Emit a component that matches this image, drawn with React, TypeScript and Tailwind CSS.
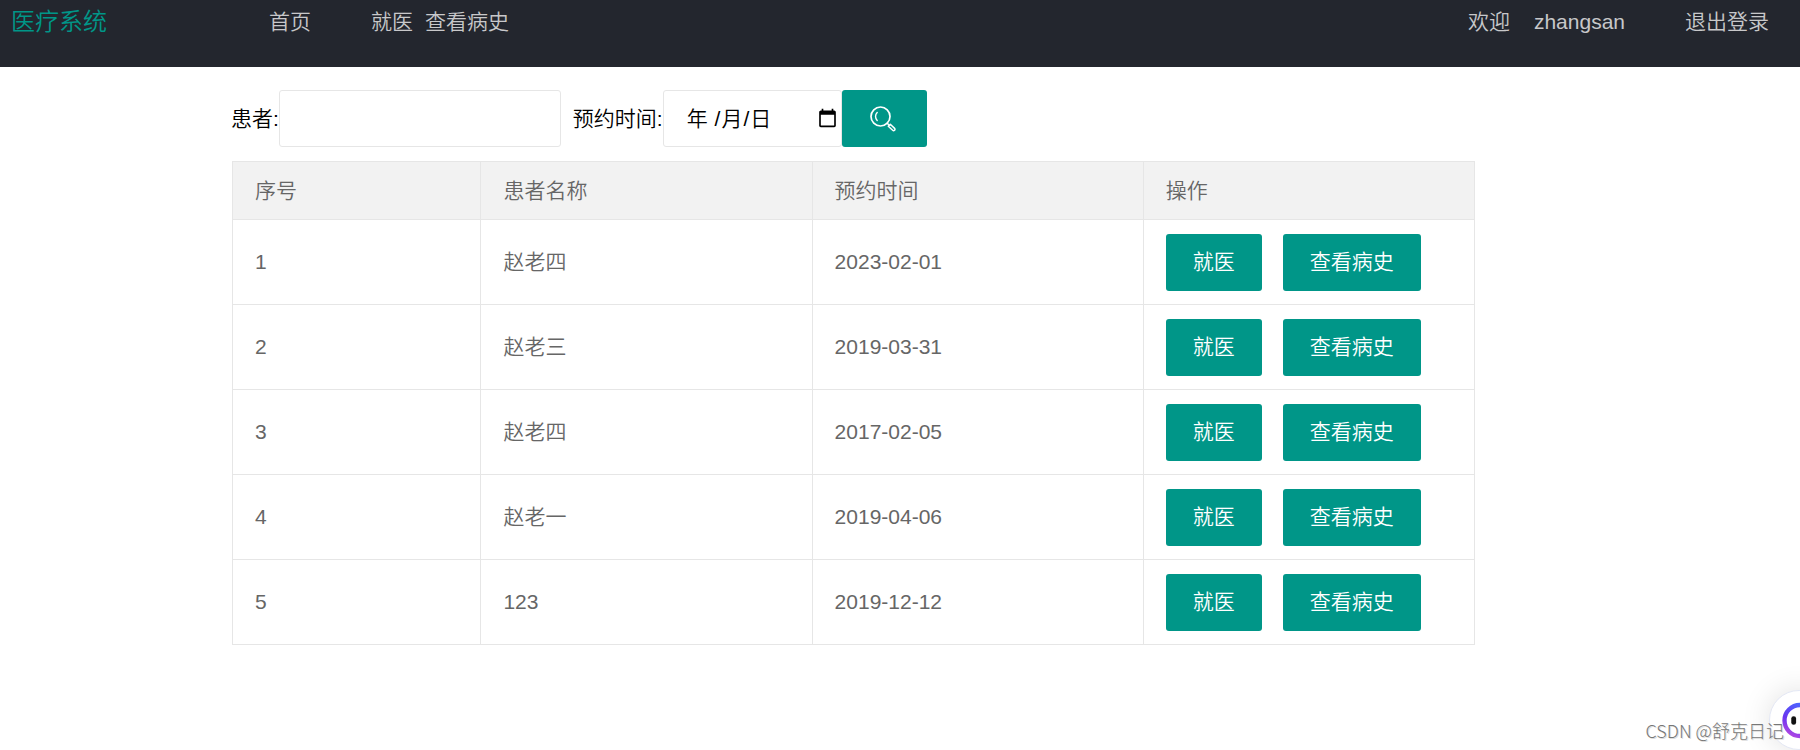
import { useState } from "react";

const visits = [
  { id: 1, name: "赵老四", date: "2023-02-01" },
  { id: 2, name: "赵老三", date: "2019-03-31" },
  { id: 3, name: "赵老四", date: "2017-02-05" },
  { id: 4, name: "赵老一", date: "2019-04-06" },
  { id: 5, name: "123", date: "2019-12-12" },
];

function SearchIcon() {
  return (
    <svg viewBox="0 0 26 26" className="size-[26px]" fill="none" stroke="currentColor" strokeLinecap="round" aria-hidden="true">
      <circle cx="10.5" cy="10.5" r="9.5" strokeWidth="1.7" />
      <path d="M7.2 6.600c-2.200 2.100-2.200 5.600 0 7.800" strokeWidth="1.400" />
      <path d="M17.200 17.300l2 2" strokeWidth="1.500" />
      <path d="M18.300 20.200l2-1.900 4.300 4.100c1.200 1.200-.7 3-1.900 1.900z" strokeWidth="1.500" strokeLinejoin="round" />
    </svg>
  );
}

function AssistantIcon() {
  return (
    <svg viewBox="0 0 60 60" className="size-[58px]" aria-hidden="true">
      <defs>
        <linearGradient id="ring" x1="0" y1="1" x2="0.6" y2="0">
          <stop offset="0" stopColor="#c04be0" />
          <stop offset="0.45" stopColor="#6a35f0" />
          <stop offset="1" stopColor="#4a68ff" />
        </linearGradient>
      </defs>
      <rect x="15" y="14.500" width="36" height="32" rx="16" fill="none" stroke="url(#ring)" strokeWidth="4.500" />
      <rect x="22" y="26" width="5" height="9" rx="2.500" fill="#111" />
      <rect x="37" y="26" width="5" height="9" rx="2.500" fill="#111" />
    </svg>
  );
}

function Header() {
  return (
    <header className="flex h-[67px] items-start justify-between bg-[#23262e] pr-[31px] pl-[11px] leading-[44px] text-white/75">
      <div className="flex">
        <div className="w-[258px] text-2xl leading-[44px] text-[#009688]">医疗系统</div>
        <nav className="flex">
          <a href="#home" className="mr-[60px]">首页</a>
          <a href="#visit" className="mr-3">就医</a>
          <a href="#history">查看病史</a>
        </nav>
      </div>
      <div className="flex">
        <span className="mr-6">欢迎</span>
        <span className="mr-[60px]">zhangsan</span>
        <a href="#logout">退出登录</a>
      </div>
    </header>
  );
}

export default function App() {
  const [date, setDate] = useState("");
  return (
    <div className="relative min-h-screen overflow-hidden bg-white font-['Liberation_Sans','Noto_Sans_CJK_SC',sans-serif] text-[21px] font-[350] text-black">
      <Header />
      <main className="pt-[23px] pr-[325px] pl-[232px]">
        <form className="-ml-px flex items-center" onSubmit={(e) => e.preventDefault()}>
          <label htmlFor="patient">患者:</label>
          <input id="patient" type="text" className="h-[57px] w-[282px] rounded-[3px] border border-[#e6e6e6] px-4 outline-none" />
          <label htmlFor="date" className="ml-3">预约时间:</label>
          <div className="relative">
            <input
              id="date"
              type="date"
              value={date}
              onChange={(e) => setDate(e.target.value)}
              className={
                "block h-[57px] w-[179px] rounded-[3px] border border-[#e6e6e6] pr-px pl-4 outline-none " +
                (date ? "" : "[&::-webkit-datetime-edit]:opacity-0")
              }
            />
            {!date && (
              <span className="pointer-events-none absolute inset-y-0 left-6 flex items-center gap-px whitespace-pre">
                <span>年 </span>
                <span>/</span>
                <span>月</span>
                <span>/</span>
                <span>日</span>
              </span>
            )}
          </div>
          <button type="submit" aria-label="搜索" className="flex h-[57px] w-[85px] items-center justify-center rounded-[3px] bg-[#009688] pr-0.5 text-white">
            <SearchIcon />
          </button>
        </form>
        <table className="mt-[14px] w-full table-fixed border-collapse text-left text-[#666]">
          <colgroup>
            <col className="w-[20%]" />
            <col />
            <col />
            <col />
          </colgroup>
          <thead className="bg-[#f2f2f2]">
            <tr className="h-[58px]">
              {["序号", "患者名称", "预约时间", "操作"].map((title) => (
                <th key={title} scope="col" className="border border-[#e6e6e6] px-[22px] font-[350]">{title}</th>
              ))}
            </tr>
          </thead>
          <tbody>
            {visits.map((v) => (
              <tr key={v.id} className="h-[85px]">
                <td className="border border-[#e6e6e6] px-[22px]">{v.id}</td>
                <td className="border border-[#e6e6e6] px-[22px]">{v.name}</td>
                <td className="border border-[#e6e6e6] px-[22px]">{v.date}</td>
                <td className="border border-[#e6e6e6] px-[22px]">
                  <div className="flex gap-[21px] text-white">
                    <button type="button" className="h-[57px] rounded-[3px] bg-[#009688] px-[27px]">就医</button>
                    <button type="button" className="h-[57px] rounded-[3px] bg-[#009688] px-[27px]">查看病史</button>
                  </div>
                </td>
              </tr>
            ))}
          </tbody>
        </table>
      </main>
      <button type="button" aria-label="助手" className="absolute -right-[29px] bottom-0 rounded-full border border-[#e4e8f5] bg-white shadow-[0_0_30px_rgba(0,0,0,0.12)]">
        <AssistantIcon />
      </button>
      <p className="pointer-events-none absolute right-4 bottom-1.5 font-['Noto_Sans_CJK_SC',sans-serif] text-[18px] leading-7 font-light text-[#777] [text-shadow:1px_1px_0_#ddd]">CSDN @舒克日记</p>
    </div>
  );
}
